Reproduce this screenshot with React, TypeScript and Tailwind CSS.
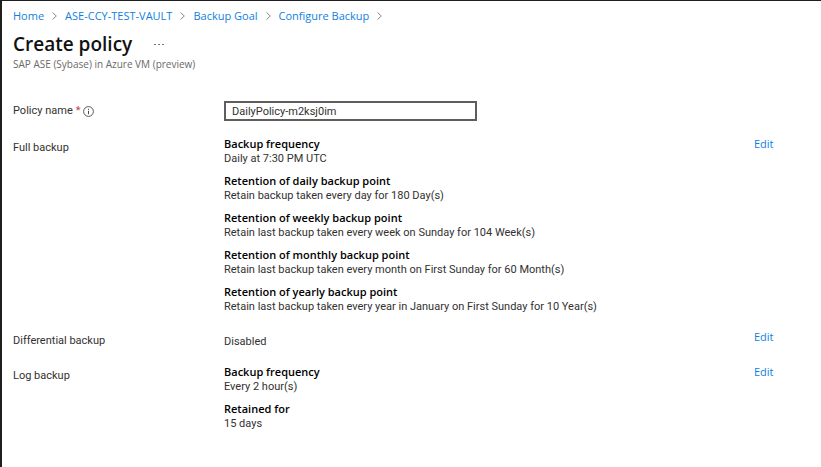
import React from "react";

const crumbs = ["Home", "ASE-CCY-TEST-VAULT", "Backup Goal", "Configure Backup"];

type Entry = { title?: string; text: string };
type Section = { label: string; entries: Entry[] };

const sections: Section[] = [
  {
    label: "Full backup",
    entries: [
      { title: "Backup frequency", text: "Daily at 7:30 PM UTC" },
      { title: "Retention of daily backup point", text: "Retain backup taken every day for 180 Day(s)" },
      { title: "Retention of weekly backup point", text: "Retain last backup taken every week on Sunday for 104 Week(s)" },
      { title: "Retention of monthly backup point", text: "Retain last backup taken every month on First Sunday for 60 Month(s)" },
      { title: "Retention of yearly backup point", text: "Retain last backup taken every year in January on First Sunday for 10 Year(s)" },
    ],
  },
  { label: "Differential backup", entries: [{ text: "Disabled" }] },
  {
    label: "Log backup",
    entries: [
      { title: "Backup frequency", text: "Every 2 hour(s)" },
      { title: "Retained for", text: "15 days" },
    ],
  },
];

function Chevron() {
  return (
    <svg width="5" height="8" viewBox="0 0 5 8" fill="none" stroke="#8a8886" aria-hidden="true">
      <path d="M.5.5L4.3 4 .5 7.5" />
    </svg>
  );
}

function InfoIcon() {
  return (
    <svg width="11" height="11" viewBox="0 0 11 11" fill="none" stroke="#484644" aria-hidden="true">
      <circle cx="5.5" cy="5.5" r="4.9" strokeWidth=".9" />
      <path d="M5.5 4.8v3.4M5.5 2.8v1.1" />
    </svg>
  );
}

export default function App() {
  return (
    <main className="min-h-screen border-t border-l-2 border-[#201f1f] bg-white pl-[11px] font-['Roboto','Open_Sans',sans-serif] text-[11px] leading-[14px] text-[#323130]">
      <nav aria-label="Breadcrumb" className="flex items-center gap-2 pt-2 font-['Open_Sans','Noto_Sans',sans-serif]">
        {crumbs.map((crumb) => (
          <React.Fragment key={crumb}>
            <a href="#" className="text-[#107fe0]">{crumb}</a>
            <Chevron />
          </React.Fragment>
        ))}
      </nav>
      <header className="pt-2 font-['Open_Sans','Noto_Sans',sans-serif]">
        <div className="flex items-center gap-5">
          <h1 className="text-[19px] leading-[26px] font-semibold text-[#111111]">Create policy</h1>
          <button type="button" aria-label="More actions" className="flex h-4 w-4 items-center gap-[2px] pl-[2px]">
            <span className="h-px w-[2px] bg-[#767676]" />
            <span className="h-px w-[2px] bg-[#767676]" />
            <span className="h-px w-[2px] bg-[#767676]" />
          </button>
        </div>
        <p className="text-[10px] text-[#6b6967]">SAP ASE (Sybase) in Azure VM (preview)</p>
      </header>
      <form className="pt-[30px]">
        <div className="flex items-center">
          <label htmlFor="policy-name" className="flex w-[211px] items-center gap-[3px]">
            Policy name <span className="text-[#c4454d]">*</span>
            <InfoIcon />
          </label>
          <input
            id="policy-name"
            type="text"
            defaultValue="DailyPolicy-m2ksj0im"
            className="h-5 w-[253px] border-2 border-[#605e5c] px-[6px]"
          />
        </div>
        {sections.map(({ label, entries }) => (
          <section key={label} className="flex pt-4">
            <h2 className="w-[211px] pt-1">{label}</h2>
            <dl className="flex w-[530px] flex-col gap-2">
              {entries.map(({ title, text }) => (
                <div key={text} className={title ? "" : "pt-1"}>
                  {title && <dt className="font-['Open_Sans','Noto_Sans',sans-serif] font-semibold text-black">{title}</dt>}
                  <dd className="leading-[15px]">{text}</dd>
                </div>
              ))}
            </dl>
            <a href="#" aria-label={`Edit ${label}`} className="self-start font-['Open_Sans','Noto_Sans',sans-serif] text-[#107fe0]">
              Edit
            </a>
          </section>
        ))}
      </form>
    </main>
  );
}
